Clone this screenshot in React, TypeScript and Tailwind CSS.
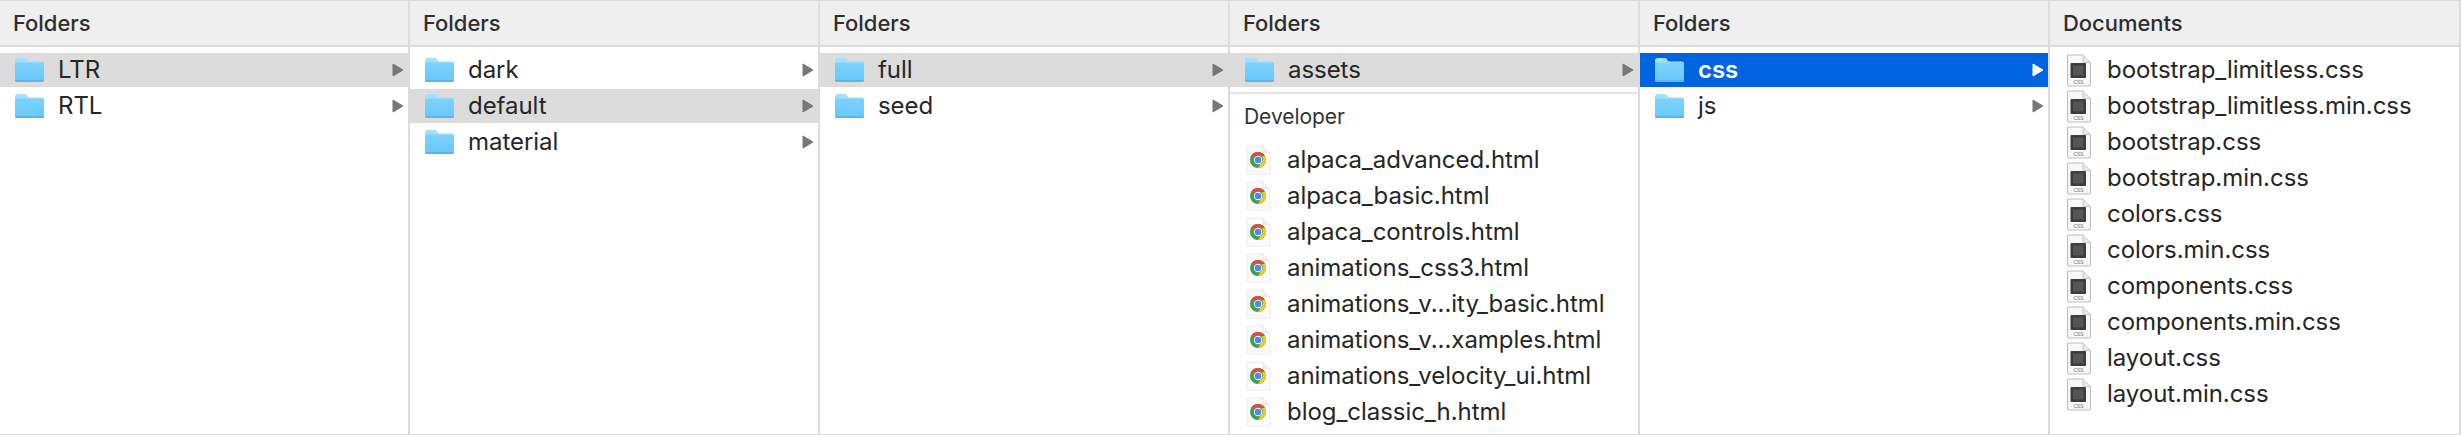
import React from "react";

const Folder = () => (
  <svg width="31" height="26" viewBox="0 0 31 26" className="shrink-0">
    <defs>
      <linearGradient id="fg" x1="0" y1="0" x2="0" y2="1">
        <stop offset="0" stopColor="#7ed2fc" />
        <stop offset="1" stopColor="#66c8fb" />
      </linearGradient>
    </defs>
    <path d="M1 3.500C1 2 2 1 3.500 1h7c1.200 0 1.800.5 2.500 1.400L14.500 4.500H28c1.200 0 2 .8 2 2V23c0 1.200-.8 2-2 2H3c-1.200 0-2-.8-2-2z" fill="#a4dffb" />
    <path d="M1 7c0-.9.7-1.500 1.500-1.500h26c.9 0 1.500.6 1.500 1.500v16c0 1.200-.8 2-2 2H3c-1.200 0-2-.8-2-2z" fill="url(#fg)" />
    <path d="M1 23.200c0 1.100.8 1.800 2 1.800h25c1.200 0 2-.7 2-1.800v-.2H1z" fill="#5fb6e6" />
  </svg>
);

const Chrome = () => (
  <svg width="26" height="30" viewBox="0 0 26 30" className="shrink-0">
    <path d="M1 1h16l7 7v21H1z" fill="#fbfbfb" stroke="#ececec" />
    <path d="M17 1v7h7" fill="#f0f0f0" stroke="#e8e8e8" />
    <circle cx="12" cy="15" r="8" fill="#3f9f4d" />
    <path d="M12 7a8 8 0 0 1 6.930 4H12a4 4 0 0 0-3.600 2.200L5.500 10.300A8 8 0 0 1 12 7z" fill="#dd4b3e" />
    <path d="M18.930 11A8 8 0 0 1 12 23l3.400-6a4 4 0 0 0 0-6z" fill="#f4c430" />
    <circle cx="12" cy="15" r="4.200" fill="#fff" />
    <circle cx="12" cy="15" r="3.300" fill="#4a8af4" />
  </svg>
);

const CssDoc = () => (
  <svg width="26" height="33" viewBox="0 0 26 33" className="shrink-0">
    <path d="M1.500 1h15.500l7.500 7.500v22.500a1 1 0 0 1-1 1H2.500a1 1 0 0 1-1-1z" fill="#f7f7f7" stroke="#bdbdbd" />
    <path d="M17 1v7.500h7.500" fill="#e6e6e6" stroke="#c8c8c8" />
    <rect x="4.500" y="9" width="15.500" height="15" rx="1" fill="#3c3c3c" />
    <rect x="7" y="11.500" width="10.500" height="10" fill="#555" />
    <text x="12.500" y="30" textAnchor="middle" fontSize="5" fill="#777" fontFamily="Liberation Sans, sans-serif">CSS</text>
  </svg>
);

const Arrow = ({ white }: { white?: boolean }) => (
  <svg width="12" height="14" viewBox="0 0 12 14" className="shrink-0">
    <path d="M1 1L11 7L1 13z" fill={white ? "#ffffff" : "#777777"} stroke={white ? "#ffffff" : "#777777"} strokeLinejoin="round" />
  </svg>
);

type RowProps = { name: string; active?: boolean; blue?: boolean };

const FolderRow = ({ name, active, blue }: RowProps) => (
  <div
    className={`flex h-[34px] mb-[2px] items-center pl-[14px] pr-[4px] ${
      blue ? "bg-[#0064e1] text-white font-semibold" : active ? "bg-[#dcdcdc]" : ""
    }`}
  >
    <Folder />
    <span className="ml-[13px] flex-1">{name}</span>
    <Arrow white={blue} />
  </div>
);

const FileRow = ({ name, icon }: { name: string; icon: React.ReactNode }) => (
  <div className="flex h-[34px] mb-[2px] items-center pl-[16px]">
    {icon}
    <span className="ml-[15px] whitespace-nowrap">{name}</span>
  </div>
);

const Header = ({ title }: { title: string }) => (
  <div className="h-[46px] bg-[#efefef] border-b-2 border-[#dcdcdc] flex items-center pl-[13px] text-[22px] font-medium text-[#2e2e2e] shrink-0">
    {title}
  </div>
);

const Column = ({ title, children, last }: { title: string; children: React.ReactNode; last?: boolean }) => (
  <div className={`${last ? "flex-1 border-r-2" : "w-[410px] border-r-2"} border-[#dcdcdc] flex flex-col overflow-hidden`}>
    <Header title={title} />
    <div className="pt-[6px] flex-1 overflow-hidden">{children}</div>
  </div>
);

const html = [
  "alpaca_advanced.html",
  "alpaca_basic.html",
  "alpaca_controls.html",
  "animations_css3.html",
  "animations_v...ity_basic.html",
  "animations_v...xamples.html",
  "animations_velocity_ui.html",
  "blog_classic_h.html",
];

const css = [
  "bootstrap_limitless.css",
  "bootstrap_limitless.min.css",
  "bootstrap.css",
  "bootstrap.min.css",
  "colors.css",
  "colors.min.css",
  "components.css",
  "components.min.css",
  "layout.css",
  "layout.min.css",
];

export default function App() {
  return (
    <div
      className="w-[2461px] h-[435px] bg-white border-y border-[#dcdcdc] flex text-[24px] leading-[34px] tracking-[-0.05px] text-[#262626] overflow-hidden"
      style={{ fontFamily: "Inter, 'Liberation Sans', sans-serif" }}
    >
      <Column title="Folders">
        <FolderRow name="LTR" active />
        <FolderRow name="RTL" />
      </Column>
      <Column title="Folders">
        <FolderRow name="dark" />
        <FolderRow name="default" active />
        <FolderRow name="material" />
      </Column>
      <Column title="Folders">
        <FolderRow name="full" active />
        <FolderRow name="seed" />
      </Column>
      <Column title="Folders">
        <FolderRow name="assets" active />
        <div className="border-t-2 border-[#e4e4e4] mt-[5px] pt-[6px] pl-[14px] h-[48px] text-[21px] text-[#333333]">Developer</div>
        <div className="mt-[3px]">
          {html.map((n) => (
            <FileRow key={n} name={n} icon={<Chrome />} />
          ))}
        </div>
      </Column>
      <Column title="Folders">
        <FolderRow name="css" blue />
        <FolderRow name="js" />
      </Column>
      <Column title="Documents" last>
        {css.map((n) => (
          <FileRow key={n} name={n} icon={<CssDoc />} />
        ))}
      </Column>
    </div>
  );
}
